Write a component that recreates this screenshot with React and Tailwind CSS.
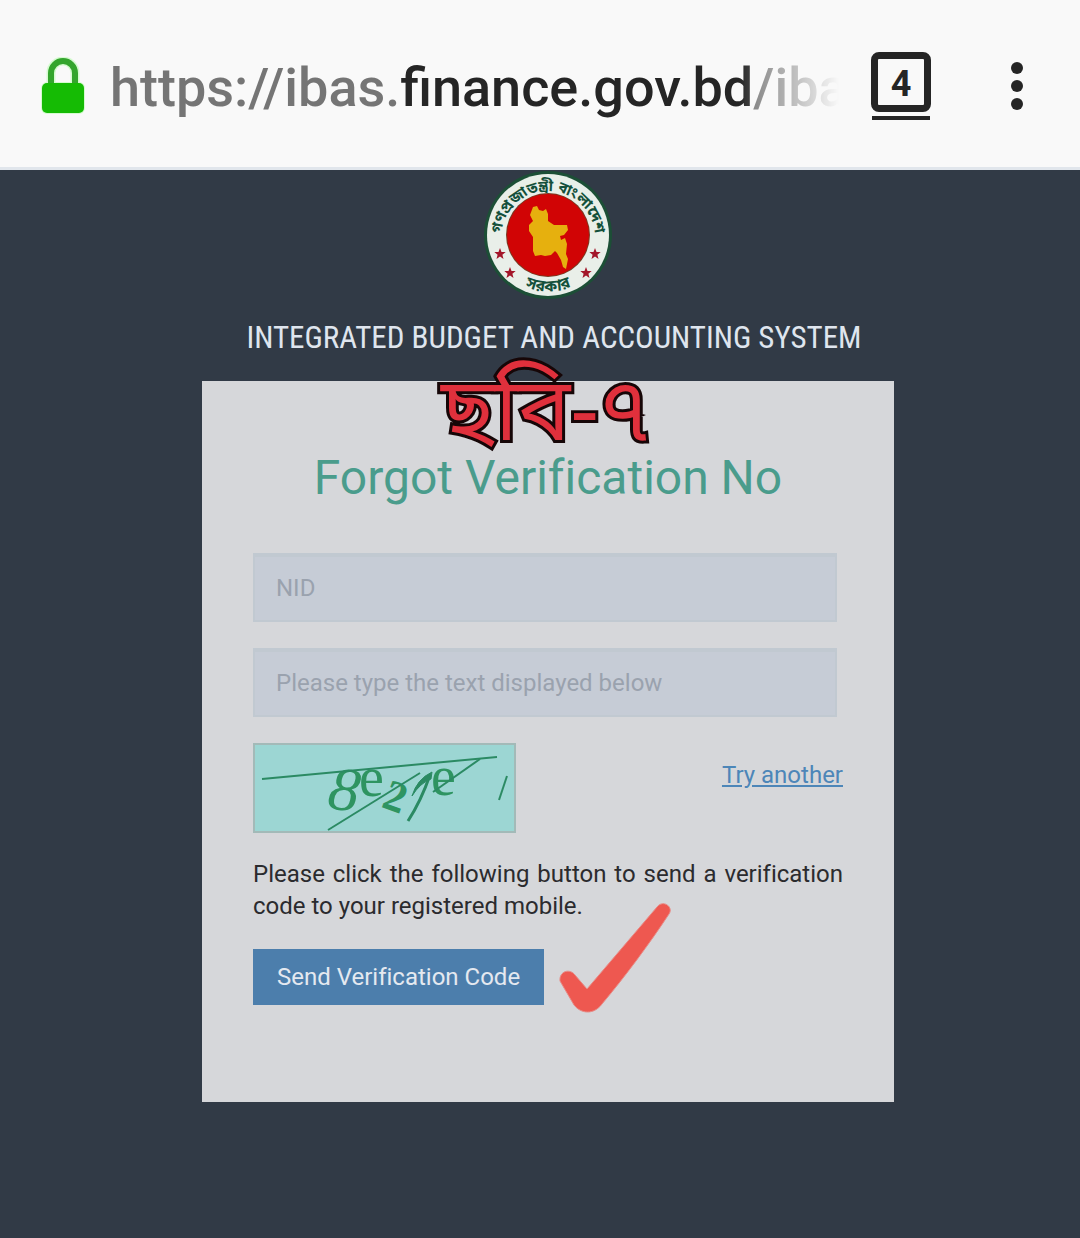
const bengali = '"Noto Sans Bengali", "Lohit Bengali", "Noto Sans", sans-serif';

function Star({ x, y }) {
  return (
    <polygon
      transform={`translate(${x} ${y})`}
      points="0,-6 1.5,-2 5.7,-1.9 2.4,0.8 3.5,4.9 0,2.5 -3.5,4.9 -2.4,0.8 -5.7,-1.9 -1.5,-2"
      fill="#a3162a"
    />
  );
}

function Emblem() {
  return (
    <svg viewBox="0 0 128 128" className="h-32 w-32" role="img" aria-label="Government seal">
      <defs>
        <path id="ring-top" d="M17 70 V67 A47 47 0 0 1 111 67 V70" />
        <path id="ring-bottom" d="M24 104 A57 57 0 0 0 104 104" />
      </defs>
      <circle cx="64" cy="64" r="64" fill="#1c4f36" />
      <circle cx="64" cy="64" r="61" fill="#e9efe9" />
      <circle cx="64" cy="64" r="42" fill="#7a3a22" />
      <circle cx="64" cy="64" r="41" fill="#d10405" />
      <path
        fill="#e6b00e"
        d="M49 36 L53 35 L55 39 L59 40 L62 38 L64 43 L64 50 L70 54 L83 54 L84 59 L80 64 L76 65 L77 69 L81 67 L83 73 L82 83 L84 88 L82 98 L79 96 L77 89 L73 82 L71 80 L67 84 L61 85 L57 84 L51 85 L49 80 L49 66 L45 60 L45 54 L49 50 L46 44 Z"
      />
      <g fill="#14503b" fontWeight="700" fontFamily={bengali} textAnchor="middle">
        <text fontSize="15">
          <textPath href="#ring-top" startOffset="50%">গণপ্রজাতন্ত্রী বাংলাদেশ</textPath>
        </text>
        <text fontSize="16">
          <textPath href="#ring-bottom" startOffset="50%">সরকার</textPath>
        </text>
      </g>
      <Star x={16} y={83} />
      <Star x={26} y={102} />
      <Star x={111} y={83} />
      <Star x={102} y={102} />
    </svg>
  );
}

function Captcha() {
  return (
    <svg viewBox="0 0 263 90" className="h-[90px] w-[263px]" role="img" aria-label="Verification text">
      <rect x="1" y="1" width="261" height="88" fill="#9cd6d3" stroke="#a3bab8" strokeWidth="2" />
      <g fill="#2e9461" fontFamily='"Liberation Serif", serif'>
        <text x="76" y="67" fontSize="62" fontStyle="italic" transform="rotate(8 91 47)">8</text>
        <text x="106" y="53" fontSize="56">e</text>
        <text x="131" y="68" fontSize="44" fontWeight="700" transform="rotate(20 142 55)">2</text>
        <text x="178" y="52" fontSize="56">e</text>
      </g>
      <g fill="none" stroke="#2b8a63" strokeWidth="2">
        <path d="M9 36 L244 14" />
        <path d="M75 87 L167 30" />
        <path d="M155 78 Q168 58 177 32" strokeWidth="3" />
        <path d="M179 29 Q164 36 159 53 Q167 40 178 36 Z" fill="#2b8a63" strokeWidth="1" />
        <path d="M180 49 L227 16" />
        <path d="M254 33 L246 57" />
      </g>
    </svg>
  );
}

export default function App() {
  return (
    <div className="flex min-h-screen flex-col bg-[#313a46] font-[Roboto,sans-serif]">
      <header className="flex h-[170px] items-center border-b-[3px] border-[#e1e6ec] bg-[#f9f9f9] pl-10 pr-[57px] pt-1">
        <svg viewBox="0 0 46 58" className="h-[58px] w-[46px] shrink-0" role="img" aria-label="Secure">
          <path d="M11 28 V16 a12 12 0 0 1 24 0 V28" fill="none" stroke="#d5fbd0" strokeWidth="9" />
          <rect x="1" y="25" width="44" height="32" rx="6" fill="#d5fbd0" />
          <path d="M11 28 V16 a12 12 0 0 1 24 0 V28" fill="none" stroke="#34a52d" strokeWidth="6" />
          <rect x="2" y="26" width="42" height="30" rx="5" fill="#15bb04" />
        </svg>
        <div className="ml-6 mt-1 flex-1 overflow-hidden whitespace-nowrap text-[54px] font-medium leading-[72px] text-[#757575] [mask-image:linear-gradient(to_right,black_calc(100%_-_100px),transparent_100%)]">
          https://ibas.<span className="text-[#252525]">finance.gov.bd</span>/iba
        </div>
        <button type="button" aria-label="4 open tabs" className="ml-8 flex shrink-0 flex-col items-center">
          <span className="flex h-[60px] w-[60px] items-center justify-center rounded-lg border-[7px] border-[#252525] pt-1 text-4xl font-bold text-[#252525]">
            4
          </span>
          <span className="mt-1 h-1 w-[58px] bg-[#252525]" />
        </button>
        <button type="button" aria-label="Menu" className="ml-20 flex shrink-0 flex-col gap-1.5">
          <span className="h-3 w-3 rounded-full bg-[#252525]" />
          <span className="h-3 w-3 rounded-full bg-[#252525]" />
          <span className="h-3 w-3 rounded-full bg-[#252525]" />
        </button>
      </header>

      <main className="flex flex-col items-center pl-4 pt-px [font-variant-ligatures:none]">
        <Emblem />
        <h1 className="mt-[19px] whitespace-nowrap pl-3 font-['Roboto_Condensed','Liberation_Sans_Narrow',Roboto,sans-serif] text-[31px] leading-10 text-[#dfe5ee]">
          INTEGRATED BUDGET AND ACCOUNTING SYSTEM
        </h1>
        <section className="relative mt-[23px] min-h-[721px] w-[692px] max-w-full bg-[#d6d7da] px-[51px] pt-[69px]">
          <svg viewBox="0 0 230 110" className="absolute left-[229px] -top-8 h-[110px] w-[230px] overflow-visible">
            <text
              x="115"
              y="91"
              textAnchor="middle"
              fontSize="88"
              fontWeight="400"
              fontFamily={bengali}
              fill="#e0303c"
              stroke="#160607"
              strokeWidth="6"
              paintOrder="stroke"
            >
              ছবি-৭
            </text>
          </svg>
          <h2 className="text-center text-5xl leading-[56px] text-[#4a9c8c]">Forgot Verification No</h2>
          <form className="mt-[47px] flex flex-col" onSubmit={(e) => e.preventDefault()}>
            <input
              aria-label="NID"
              placeholder="NID"
              className="mr-1.5 h-[69px] border-2 border-t-4 border-[#c1c9d1] bg-[#c6ccd6] px-[21px] pb-0.5 text-2xl text-[#444] placeholder:text-[#9aa2ae]"
            />
            <input
              aria-label="Please type the text displayed below"
              placeholder="Please type the text displayed below"
              className="mr-1.5 mt-[26px] h-[69px] border-2 border-t-4 border-[#c1c9d1] bg-[#c6ccd6] px-[21px] pb-0.5 text-2xl text-[#444] placeholder:text-[#9aa2ae]"
            />
            <div className="mt-[26px] flex justify-between">
              <Captcha />
              <a href="#another" className="mt-4 self-start text-2xl text-[#4d86b8] underline">
                Try another
              </a>
            </div>
            <p className="mt-[25px] text-justify text-2xl leading-8 text-[#2b2b2e]">
              Please click the following button to send a verification code to your registered mobile.
            </p>
            <div className="mt-[27px] flex">
              <button type="submit" className="h-14 bg-[#4c7eac] px-6 text-2xl text-[#e4e9f0]">
                Send Verification Code
              </button>
            </div>
          </form>
          <svg viewBox="0 0 112 112" className="absolute left-[357px] top-[521px] h-28 w-28">
            <path
              d="M1 79 C0 69 11 66 16 73 L28 87 L98 5 C104 -3 115 5 110 12 C91 41 65 76 43 102 C35 113 22 112 15 103 Z"
              fill="#ee5850"
              stroke="#e88b86"
            />
          </svg>
        </section>
      </main>
    </div>
  );
}
